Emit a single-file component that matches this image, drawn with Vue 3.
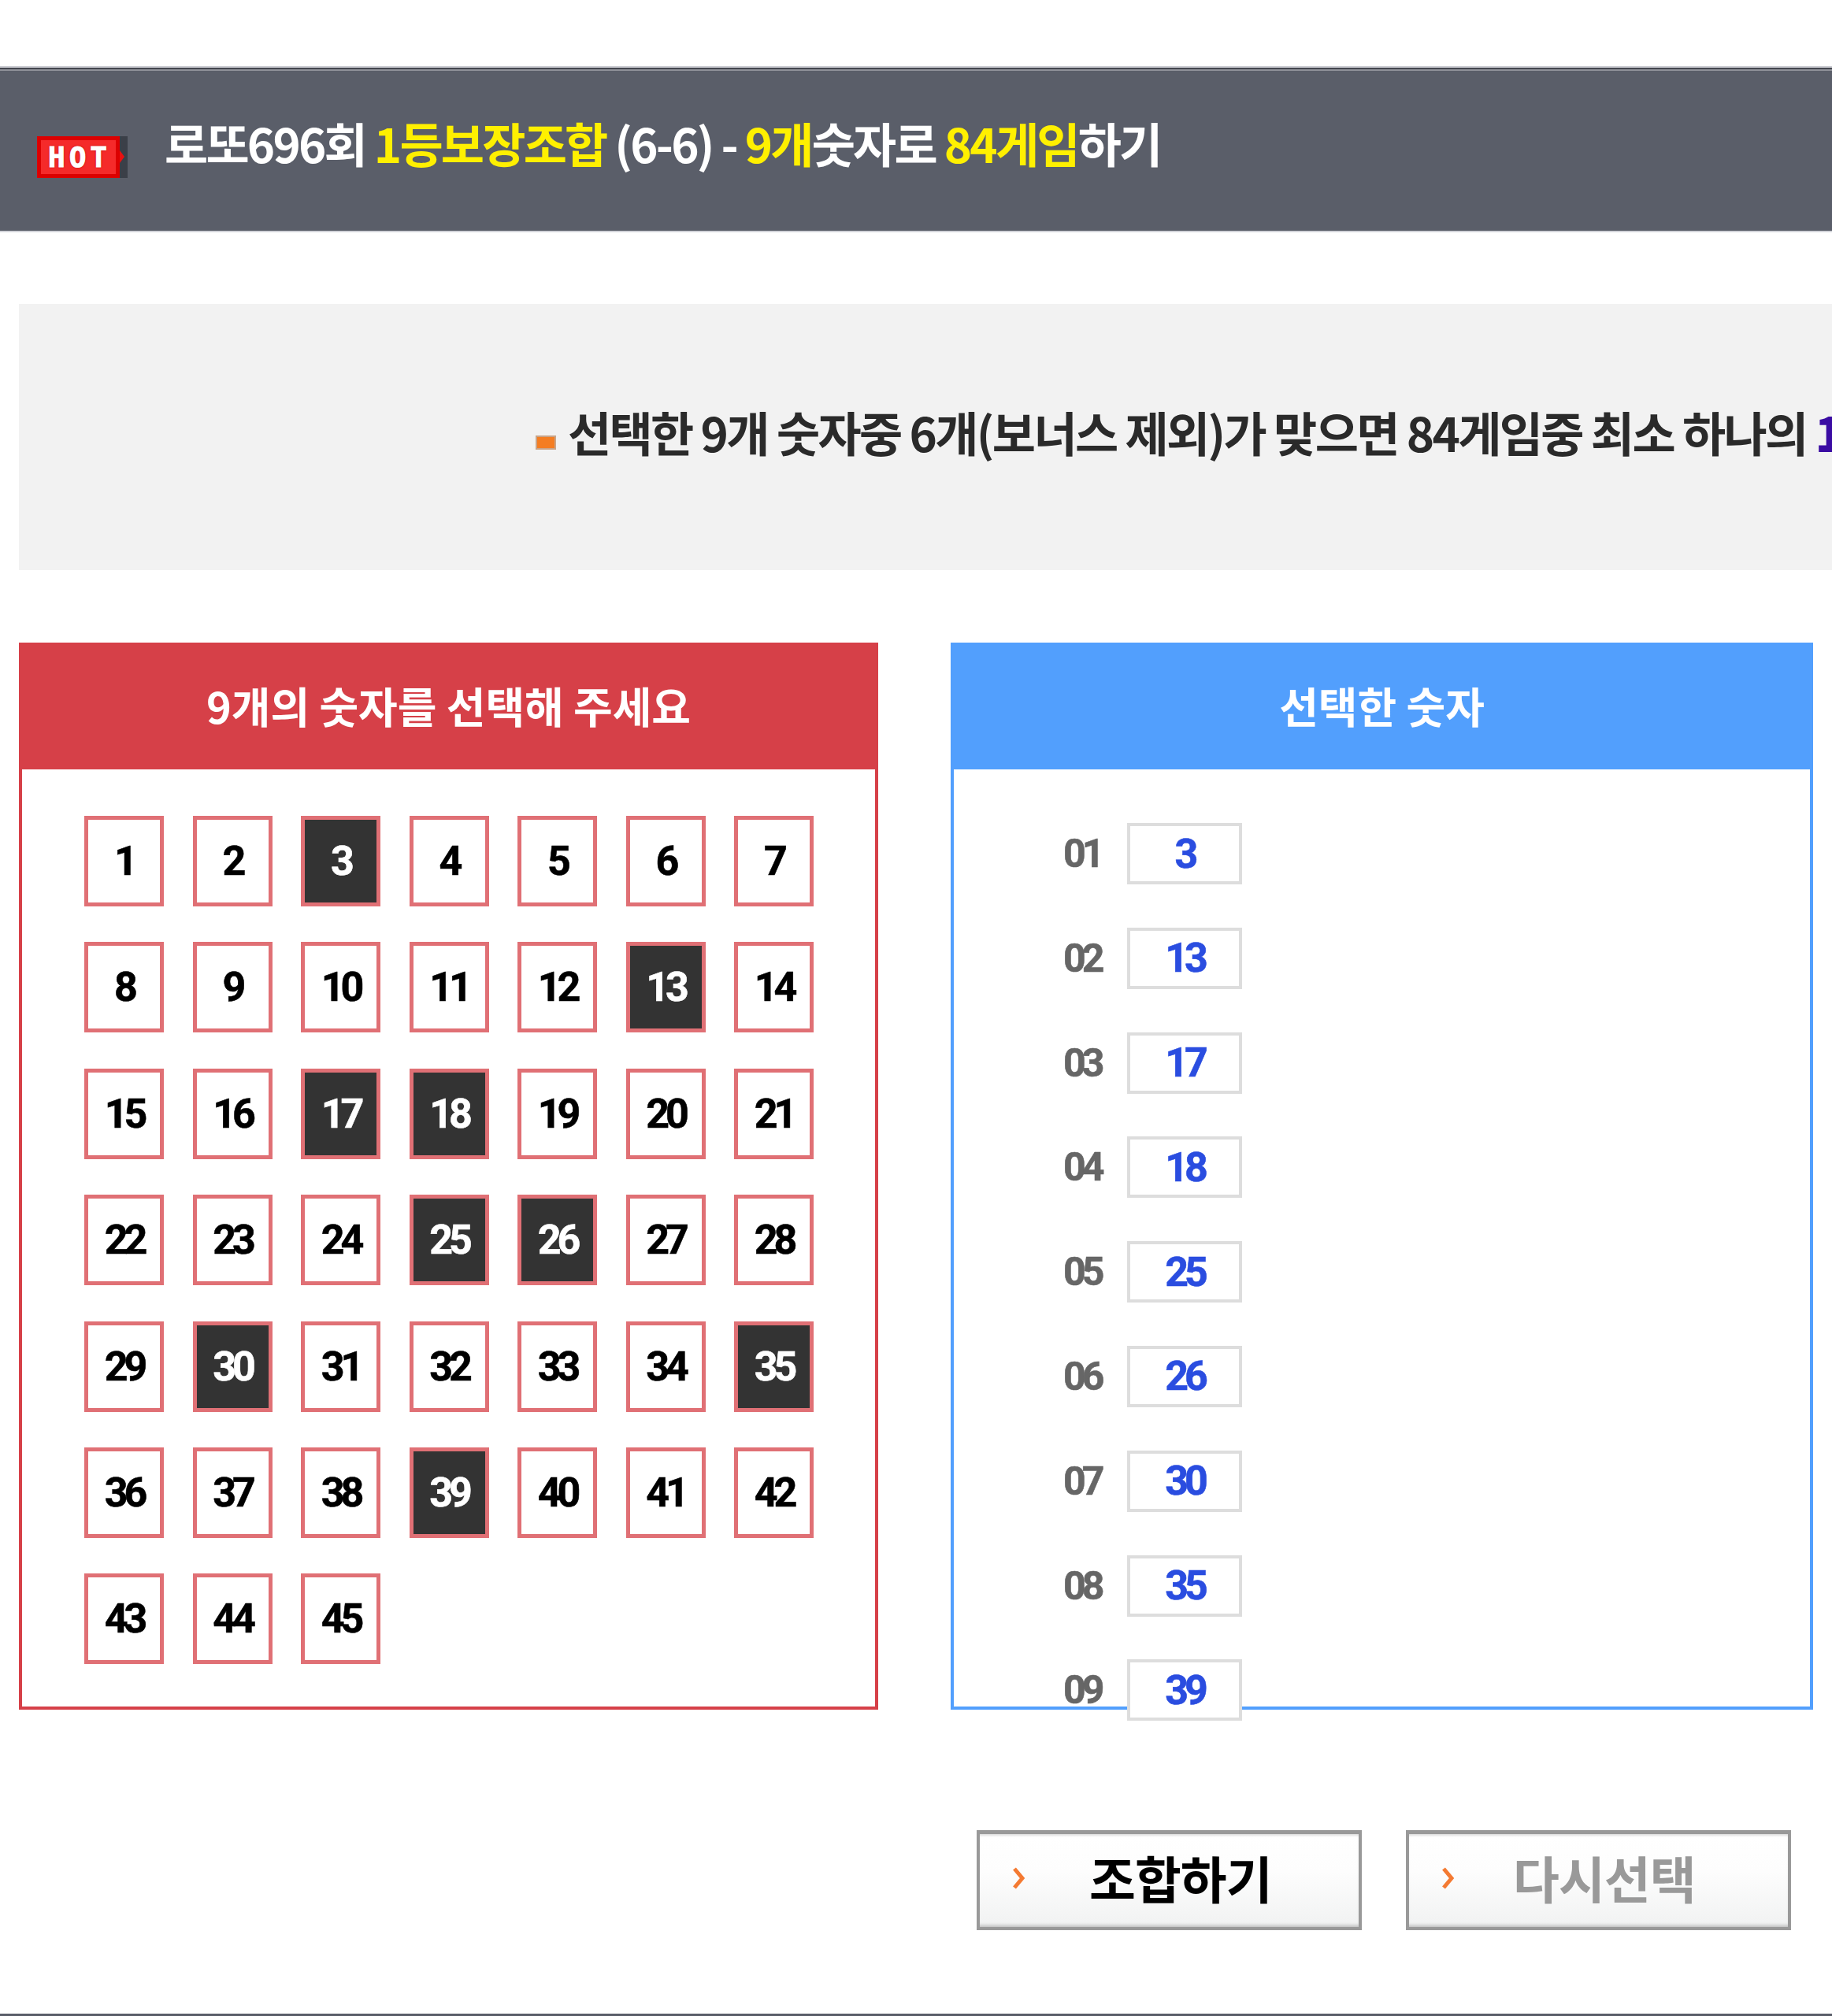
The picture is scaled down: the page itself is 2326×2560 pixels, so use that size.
<script setup>
const picked = [3, 13, 17, 18, 25, 26, 30, 35, 39];
const numbers = Array.from({ length: 45 }, (_, i) => i + 1);

const isPicked = (n) => picked.includes(n);
const order = (i) => String(i + 1).padStart(2, "0");
</script>

<template>
  <div class="page">
    <div class="title-bar">
      <div class="hot">
        <span class="hot-body">HOT</span>
        <span class="hot-tail"></span>
      </div>
      <h1 class="title">
        로또696회 <em>1등보장조합</em> (6-6) - <em>9개</em>숫자로 <em>84게임</em>하기
      </h1>
    </div>

    <div class="notice">
      <p class="notice-text">
        <i class="bullet"></i>선택한 9개 숫자중 6개(보너스 제외)가 맞으면 84게임중 최소 하나의 <b>1</b>
      </p>
    </div>

    <div class="panels">
      <section class="panel red">
        <h2 class="panel-head">9개의 숫자를 선택해 주세요</h2>
        <div class="grid">
          <div v-for="n in numbers" :key="n" class="cell" :class="{ on: isPicked(n) }">{{ n }}</div>
        </div>
      </section>

      <section class="panel blue">
        <h2 class="panel-head">선택한 숫자</h2>
        <ul class="list">
          <li v-for="(n, i) in picked" :key="n" class="row">
            <span class="order">{{ order(i) }}</span>
            <span class="value">{{ n }}</span>
          </li>
        </ul>
      </section>
    </div>

    <div class="buttons">
      <button class="btn">
        <svg class="arrow" width="20" height="30" viewBox="0 0 20 30">
          <path d="M4 3l10 12L4 27" fill="none" stroke="#f47a32" stroke-width="5" />
        </svg>
        <span>조합하기</span>
      </button>
      <button class="btn off">
        <svg class="arrow" width="20" height="30" viewBox="0 0 20 30">
          <path d="M4 3l10 12L4 27" fill="none" stroke="#f47a32" stroke-width="5" />
        </svg>
        <span>다시선택</span>
      </button>
    </div>

    <div class="bottom-line"></div>
  </div>
</template>

<style>
html,
body {
  margin: 0;
  background: #fff;
  overflow: hidden;
}
</style>

<style scoped>
.page {
  position: relative;
  width: 2326px;
  height: 2560px;
  overflow: hidden;
  padding-top: 84px;
  box-sizing: border-box;
  font-family: Roboto, "Noto Sans CJK KR", sans-serif;
}

.title-bar {
  height: 211px;
  box-sizing: border-box;
  display: flex;
  align-items: center;
  background: #5a5e69;
  border-top: 2px solid #c9cad0;
  border-bottom: 2px solid #d3d4da;
  box-shadow: inset 0 2px 0 #43464f, inset 0 4px 0 #8f9199;
}

.hot {
  margin: 20px 0 0 47px;
  width: 115px;
  height: 53px;
  display: flex;
}

.hot-body {
  width: 105px;
  box-sizing: border-box;
  display: flex;
  align-items: center;
  justify-content: center;
  padding-left: 3px;
  background: #f52a2a;
  box-shadow: inset 0 0 0 5px #dc0000;
  color: #fff;
  font-family: "DejaVu Sans Mono", monospace;
  font-weight: 700;
  font-size: 36px;
  letter-spacing: 5px;
  -webkit-text-stroke: 1px #fff;
  text-shadow: 0 0 3px #a80000;
}

.hot-tail {
  width: 10px;
  background: #3b3f48;
  position: relative;
}

.hot-tail::before {
  content: "";
  position: absolute;
  left: 0;
  top: 18px;
  border-left: 6px solid #ea1010;
  border-top: 8px solid transparent;
  border-bottom: 8px solid transparent;
}

.title {
  margin: -19px 0 0 47px;
  color: #fff;
  font-family: "Noto Sans CJK KR", sans-serif;
  font-size: 60px;
  font-weight: 700;
  letter-spacing: -2.8px;
  white-space: nowrap;
}

.title em {
  font-style: normal;
  color: #fff000;
}

.notice {
  margin: 91px 0 0 24px;
  height: 338px;
  box-sizing: border-box;
  background: #f2f2f2;
  padding: 0 0 16px 656px;
  display: flex;
  align-items: center;
  overflow: hidden;
}

.notice-text {
  margin: 0;
  color: #2a2a2a;
  font-family: "Noto Sans CJK KR", sans-serif;
  font-size: 60px;
  font-weight: 700;
  letter-spacing: -2.65px;
  white-space: nowrap;
}

.notice-text b {
  color: #3a0ca3;
}

.bullet {
  display: inline-block;
  vertical-align: 3px;
  width: 26px;
  height: 18px;
  box-sizing: border-box;
  margin-right: 15px;
  background: #f47d22;
  border: 2px solid #c9a488;
}

.panels {
  display: flex;
  gap: 92px;
  margin: 92px 0 0 24px;
}

.panel {
  width: 1091px;
  height: 1355px;
  box-sizing: border-box;
  border: 4px solid;
}

.panel.red {
  border-color: #d64048;
}

.panel.blue {
  width: 1095px;
  border-color: #529ffd;
}

.panel-head {
  margin: 0;
  height: 157px;
  line-height: 152px;
  text-align: center;
  color: #fff;
  font-family: "Noto Sans CJK KR", sans-serif;
  font-size: 54px;
  font-weight: 700;
}

.red .panel-head {
  background: #d64048;
}

.blue .panel-head {
  background: #529ffd;
}

.grid {
  display: grid;
  grid-template-columns: repeat(7, 101px);
  grid-auto-rows: 115px;
  column-gap: 36.5px;
  row-gap: 45.4px;
  padding: 59px 0 0 79px;
}

.cell {
  box-sizing: border-box;
  border: 5px solid #e07075;
  display: flex;
  align-items: center;
  justify-content: center;
  color: #000;
  font-size: 52px;
  font-weight: 700;
  letter-spacing: -5px;
  -webkit-text-stroke: 0.6px currentColor;
}

.cell.on {
  background: #333;
  color: #fff;
}

.list {
  list-style: none;
  margin: 0;
  padding: 68px 0 0 139px;
}

.row {
  display: flex;
  align-items: center;
  height: 78px;
  margin-bottom: 54.8px;
}

.order {
  width: 81px;
  color: #666;
  font-size: 50px;
  font-weight: 700;
  letter-spacing: -5px;
  -webkit-text-stroke: 0.6px currentColor;
}

.value {
  width: 146px;
  height: 78px;
  box-sizing: border-box;
  border: 4px solid #ddd;
  background: #fff;
  display: flex;
  align-items: center;
  justify-content: center;
  color: #2a4de0;
  font-size: 52px;
  font-weight: 700;
  letter-spacing: -5px;
  -webkit-text-stroke: 0.6px currentColor;
}

.buttons {
  display: flex;
  gap: 56px;
  margin: 153px 0 0 1240px;
}

.btn {
  width: 489px;
  height: 127px;
  box-sizing: border-box;
  border: 4px solid #999;
  border-top-width: 5px;
  background: linear-gradient(180deg, #fff 0, #fdfdfd 40%, #f1f2f2 100%);
  box-shadow: inset 0 -5px 4px -3px #bbb, inset 0 4px 3px -2px #ddd;
  display: flex;
  align-items: center;
  padding: 0 0 6px 40px;
  color: #000;
  font-family: "Noto Sans CJK KR", sans-serif;
  font-size: 64px;
  font-weight: 700;
  letter-spacing: -1px;
}

.btn.off {
  color: #999;
}

.arrow {
  flex: none;
}

.btn span {
  margin-left: 79px;
  margin-top: -4px;
}

.btn.off span {
  margin-left: 72px;
}

.bottom-line {
  position: absolute;
  left: 0;
  right: 0;
  bottom: 0;
  height: 3px;
  background: #5a5e69;
}
</style>
